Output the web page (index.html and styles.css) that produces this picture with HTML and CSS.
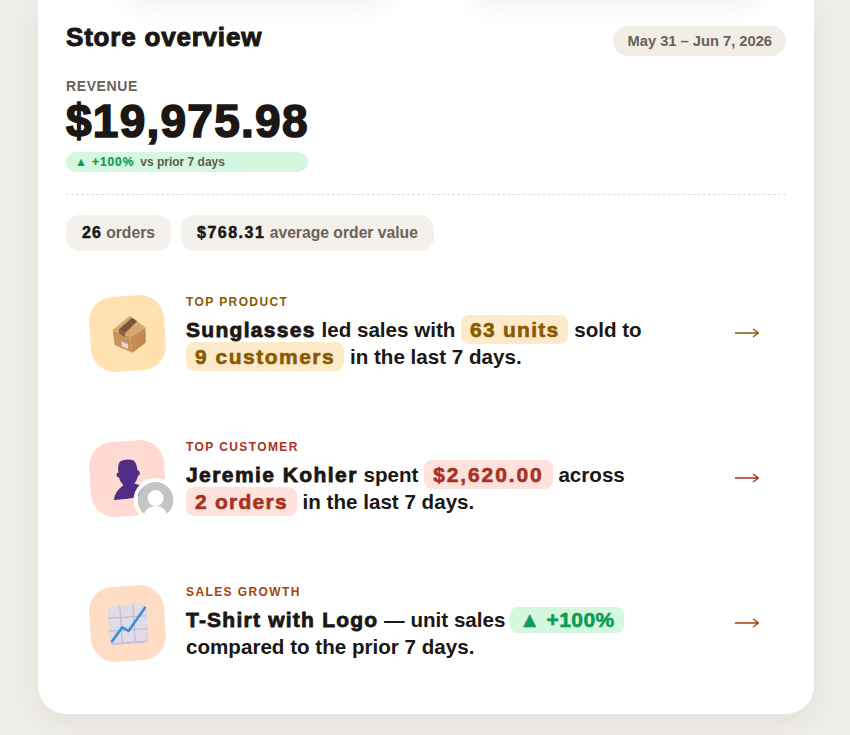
FILE: index.html
```html
<!DOCTYPE html>
<html lang="en">
<head>
<meta charset="utf-8">
<title>Store overview</title>
<link rel="stylesheet" href="styles.css">
</head>
<body>
<div class="ghost ghost-a"></div>
<div class="ghost ghost-b"></div>
<main class="card">
  <header class="head">
    <h1 class="title">Store overview</h1>
    <span class="date">May 31 – Jun 7, 2026</span>
  </header>
  <section class="hero">
    <div class="eyebrow">REVENUE</div>
    <div class="amount">$19,975.98</div>
    <div class="delta"><b>▲ +100%</b><span>vs prior 7 days</span></div>
  </section>
  <div class="chips">
    <span class="chip"><b>26</b> orders</span>
    <span class="chip"><b>$768.31</b> average order value</span>
  </div>
  <section class="rows">
    <article class="row row-product">
      <div class="tile">
        <svg class="glyph" viewBox="0 0 40 40" aria-hidden="true">
          <defs>
            <linearGradient id="boxr" x1="0" y1="0" x2="1" y2="1"><stop offset="0" stop-color="#c9955f"/><stop offset="1" stop-color="#bd7f48"/></linearGradient>
          </defs>
          <path d="M5 15 22 23 23 39 6 30Z" fill="#c8935e"/>
          <path d="M22 23 38 15 37 30 23 39Z" fill="url(#boxr)"/>
          <path d="M23 2 38 15 22 23 5 15Z" fill="#d6a974"/>
          <path d="M11 15 25 4 30 8 17 19Z" fill="#7f5440"/>
          <path d="M11 15 17 19 17 23 11 19Z" fill="#8f6249"/>
          <path d="M13 27 19 30 19 35 13 32Z" fill="#e8dcd6"/>
        </svg>
      </div>
      <div class="copy">
        <div class="label">TOP PRODUCT</div>
        <p class="text"><strong>Sunglasses</strong> led sales with <em class="hl">63 units</em> sold to<br><em class="hl hl-wide">9 customers</em> in the last 7 days.</p>
      </div>
      <svg class="arrow" viewBox="0 0 24 10" aria-hidden="true"><path d="M0 5H23.5M18 1 23.5 5 18 9"/></svg>
    </article>
    <article class="row row-customer">
      <div class="tile">
        <svg class="glyph" viewBox="0 0 40 40" aria-hidden="true">
          <path d="M13 2Q20 -1 27 2 30 6 30 12 33 13 32 16L30 18Q29 22 26 25 33 27 36 33L39 38 4 41Q6 31 15 26 12 23 11 18 8 17 9 14 10 13 11 13 10 7 13 2Z" fill="#4f2d84"/>
        </svg>
        <span class="avatar">
          <svg viewBox="0 0 36 36" aria-hidden="true">
            <circle cx="18" cy="18" r="18" fill="#c4c4c4"/>
            <circle cx="18" cy="16" r="8" fill="#fff"/>
            <path d="M5 36Q8 24 18 24 28 24 31 36Z" fill="#fff"/>
          </svg>
        </span>
      </div>
      <div class="copy">
        <div class="label">TOP CUSTOMER</div>
        <p class="text"><strong>Jeremie Kohler</strong> spent <em class="hl hl-money">$2,620.00</em> across<br><em class="hl">2 orders</em> in the last 7 days.</p>
      </div>
      <svg class="arrow" viewBox="0 0 24 10" aria-hidden="true"><path d="M0 5H23.5M18 1 23.5 5 18 9"/></svg>
    </article>
    <article class="row row-growth">
      <div class="tile">
        <svg class="glyph" viewBox="0 0 40 40" aria-hidden="true">
          <rect x="1" y="3" width="38" height="37" rx="4" fill="#c9b8e4"/>
          <rect x="1" y="1" width="38" height="37" rx="4" fill="#e0dbe8"/>
          <path d="M13 1V38M26 1V38M1 13H39M1 26H39" stroke="#bfb4c9" stroke-width="1" fill="none"/>
          <path d="M3 36 14 23 20 27 38 5" stroke="#3d8fd9" stroke-width="2.6" fill="none" stroke-linecap="round" stroke-linejoin="round"/>
        </svg>
      </div>
      <div class="copy">
        <div class="label">SALES GROWTH</div>
        <p class="text"><strong>T-Shirt with Logo</strong> — unit sales <em class="hl hl-up">▲ +100%</em><br>compared to the prior 7 days.</p>
      </div>
      <svg class="arrow" viewBox="0 0 24 10" aria-hidden="true"><path d="M0 5H23.5M18 1 23.5 5 18 9"/></svg>
    </article>
  </section>
</main>
</body>
</html>
```
FILE: styles.css
```css
* { box-sizing: border-box; }
html, body { margin: 0; height: 735px; overflow: hidden; }
body {
  background: #f0eee9;
  font-family: "Liberation Sans", Arial, sans-serif;
  color: #1a1714;
  position: relative;
}
.card {
  margin-left: 38px;
  width: 776px;
  height: 714px;
  background: #fff;
  border-radius: 0 0 28px 28px;
  box-shadow: 0 8px 32px rgba(60, 50, 30, .08);
  padding: 26px 28px 0;
}
.ghost {
  position: absolute;
  top: -30px;
  height: 30px;
  z-index: 1;
  border-radius: 20px;
  box-shadow: 0 6px 22px rgba(60, 50, 30, .07);
}
.ghost-a { left: 125px; width: 265px; }
.ghost-b { left: 470px; width: 290px; }
.head { display: flex; justify-content: space-between; align-items: flex-start; }
.title {
  margin: 0;
  font-size: 26px;
  line-height: 22px;
  font-weight: 900;
  letter-spacing: .8px;
  -webkit-text-stroke: 1px #1a1714;
}
.date {
  background: #f2ede7;
  color: #6b6258;
  border-radius: 15px;
  height: 30px;
  line-height: 30px;
  padding: 0 14px;
  font-size: 14.7px;
  font-weight: 700;
}
.hero {
  width: 242px;
  margin-top: 22px;
}
.eyebrow {
  font-size: 14px;
  font-weight: 700;
  line-height: 16px;
  letter-spacing: .6px;
  color: #6b6258;
}
.amount {
  font-size: 46px;
  line-height: 54px;
  font-weight: 900;
  letter-spacing: 1.25px;
  -webkit-text-stroke: 1.6px #1a1714;
}
.delta {
  margin-top: 4px;
  height: 20px;
  line-height: 20px;
  background: #d5f7df;
  border-radius: 10px;
  padding-left: 9px;
  font-size: 12px;
  font-weight: 700;
  color: #5c5c50;
}
.delta b { color: #0d9c55; margin-right: 6px; letter-spacing: .9px; -webkit-text-stroke: .2px #0d9c55; }
.chips {
  margin-top: 22px;
  padding-top: 20px;
  border-top: 1px dashed #e2ded6;
  display: flex;
  gap: 10px;
}
.chip {
  background: #f4f0eb;
  border-radius: 14px;
  height: 36px;
  line-height: 35px;
  padding: 0 16px;
  font-size: 15.7px;
  font-weight: 700;
  color: #6b6258;
}
.chip b { color: #1a1714; font-size: 16px; letter-spacing: 1.5px; -webkit-text-stroke: .5px #1a1714; }
.chip:first-child b { letter-spacing: 1px; }
.rows { margin-top: 29px; display: flex; flex-direction: column; gap: 39px; }
.row {
  height: 106px;
  padding: 0 27px 0 24px;
  display: flex;
  align-items: center;
}
.tile {
  width: 75px;
  height: 75px;
  border-radius: 24px;
  transform: rotate(-4deg);
  display: flex;
  align-items: center;
  justify-content: center;
  position: relative;
  flex: none;
}
.glyph { width: 40px; height: 40px; }
.avatar {
  position: absolute;
  right: -11px;
  bottom: -8px;
  width: 44px;
  height: 44px;
  border-radius: 50%;
  border: 4px solid #fff;
  overflow: hidden;
  transform: rotate(4deg);
}
.avatar svg { display: block; width: 100%; height: 100%; }
.copy { margin-left: 21px; flex: 1; padding-bottom: 2px; }
.label {
  font-size: 12px;
  font-weight: 700;
  letter-spacing: 1.4px;
  line-height: 14px;
  margin-bottom: 7px;
}
.text {
  margin: 0;
  font-size: 20.6px;
  line-height: 27px;
  font-weight: 600;
}
.text strong { font-size: 21px; font-weight: 900; letter-spacing: 1.3px; -webkit-text-stroke: .8px #1a1714; }
.row-customer strong { letter-spacing: 1.43px; }
.row-growth strong { letter-spacing: 1.23px; }
.hl {
  font-style: normal;
  font-size: 21px;
  padding: 3px 9px;
  border-radius: 8px;
  font-weight: 900;
  letter-spacing: 1.25px;
  -webkit-text-stroke: .6px currentColor;
}
.hl-wide { letter-spacing: 1.5px; }
.hl-money { letter-spacing: 1.9px; }
.hl-up { letter-spacing: .4px; padding: 1px 9px 2.5px; margin-left: -1px; }
.arrow {
  width: 24px;
  height: 10px;
  flex: none;
  fill: none;
  stroke: currentColor;
  stroke-width: 1.4;
}
.row-product .tile { background: #ffe2b0; }
.row-product .label { color: #8a5a00; }
.row-product .hl { background: #fdeacb; color: #8a5a00; }
.row-product .arrow { color: #8a5a00; }
.row-customer .tile { background: #ffd9d2; }
.row-customer .label { color: #a8321f; }
.row-customer .hl { background: #ffe2dd; color: #a8321f; }
.row-customer .arrow { color: #a8321f; }
.row-growth .tile { background: #ffdcc4; }
.row-growth .label { color: #a8420a; }
.row-growth .hl-up { background: #d5f7df; color: #0d9c55; }
.row-growth .arrow { color: #a8420a; }
```
